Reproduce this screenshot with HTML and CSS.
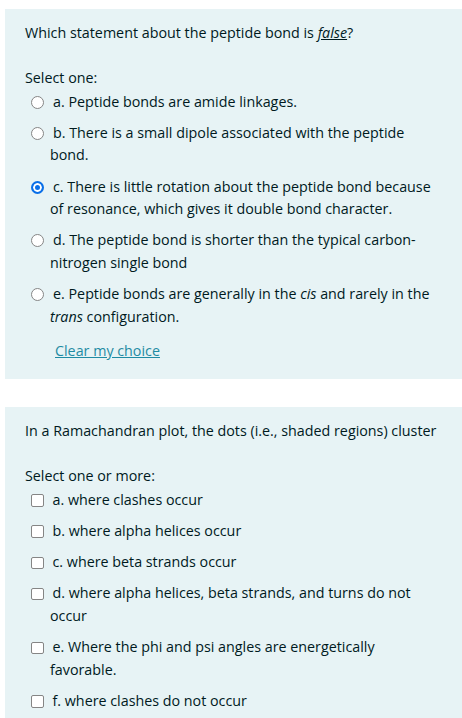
FILE: index.html
```html
<!DOCTYPE html>
<html lang="en">
<head>
<meta charset="utf-8">
<title>Quiz</title>
<link rel="stylesheet" href="styles.css">
</head>
<body>
<div class="page">
  <section class="que">
    <p class="qtext">Which statement about the peptide bond is <em class="u">false</em>?</p>
    <p class="prompt">Select one:</p>
    <div class="answers">
      <div class="opt"><span class="radio"></span>a. Peptide bonds are amide linkages.</div>
      <div class="opt"><span class="radio"></span>b. There is a small dipole associated with the peptide bond.</div>
      <div class="opt"><span class="radio checked"></span>c. There is little rotation about the peptide bond because of resonance, which gives it double bond character.</div>
      <div class="opt"><span class="radio"></span>d. The peptide bond is shorter than the typical carbon-nitrogen single bond</div>
      <div class="opt"><span class="radio"></span>e. Peptide bonds are generally in the <em>cis</em> and rarely in the <em>trans</em> configuration.</div>
    </div>
    <a class="clear" href="#">Clear my choice</a>
  </section>
  <section class="que">
    <p class="qtext">In a Ramachandran plot, the dots (i.e., shaded regions) cluster</p>
    <p class="prompt">Select one or more:</p>
    <div class="answers">
      <div class="opt"><span class="check"></span>a. where clashes occur</div>
      <div class="opt"><span class="check"></span>b. where alpha helices occur</div>
      <div class="opt"><span class="check"></span>c. where beta strands occur</div>
      <div class="opt"><span class="check"></span>d. where alpha helices, beta strands, and turns do not occur</div>
      <div class="opt"><span class="check"></span>e. Where the phi and psi angles are energetically favorable.</div>
      <div class="opt"><span class="check"></span>f. where clashes do not occur</div>
    </div>
  </section>
</div>
</body>
</html>
```
FILE: styles.css
```css
html, body {
  margin: 0;
  padding: 0;
  background: #ffffff;
}
body {
  font-family: "Open Sans", "Noto Sans", sans-serif;
  font-size: 14.3px;
  line-height: 22.5px;
  color: #001a1e;
}
.page {
  padding: 9px 0 0 5px;
  display: flex;
  flex-direction: column;
  gap: 28px;
}
.que {
  background: #e7f3f5;
  padding: 12.75px 18px 17px 20px;
}
.qtext {
  margin: 0 0 22.5px 0;
}
.u {
  text-decoration: underline;
}
.prompt {
  margin: 0 0 1.5px 0;
}
.answers {
  display: flex;
  flex-direction: column;
  gap: 8.7px;
  padding-right: 12px;
}
.opt {
  padding-left: 25px;
  text-indent: -19px;
}
.radio, .check {
  display: inline-block;
  text-indent: 0;
  width: 13px;
  height: 13px;
  box-sizing: border-box;
  margin-right: 9px;
  vertical-align: -2px;
  background: #ffffff;
  border: 1px solid #858585;
}
.radio {
  border-radius: 50%;
}
.radio.checked {
  border: 2px solid #0a6fe8;
  background: #0a6fe8;
  box-shadow: inset 0 0 0 2px #ffffff;
}
.check {
  border-radius: 2px;
  width: 12.5px;
  height: 12.5px;
}
.clear {
  display: block;
  align-self: flex-start;
  margin: 11.5px 0 0 30px;
  color: #1f8ba3;
  text-decoration: underline;
  width: max-content;
}
```
